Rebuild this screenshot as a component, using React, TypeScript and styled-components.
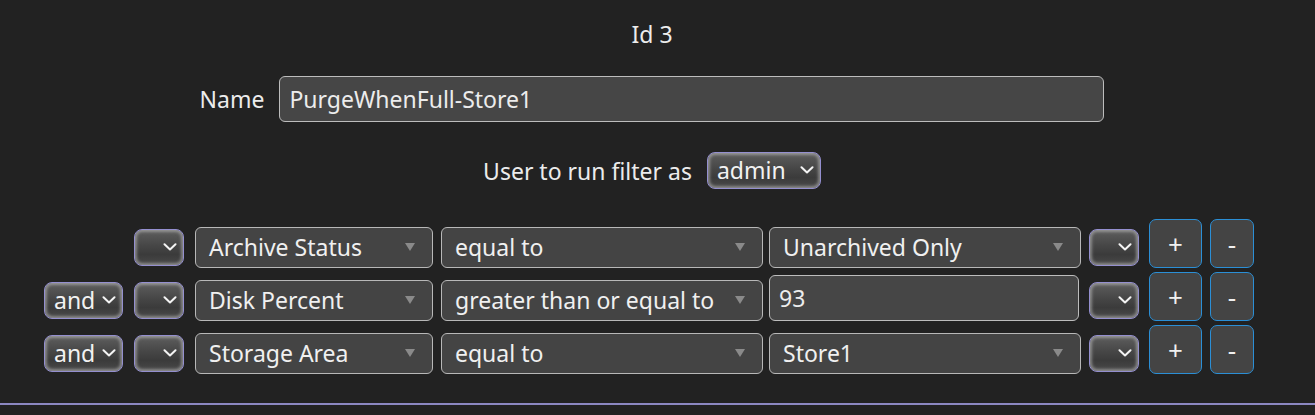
import React, { FC } from 'react'
import styled, { createGlobalStyle } from 'styled-components'

const GlobalStyle = createGlobalStyle`
  html, body {
    margin: 0;
    padding: 0;
    background: #222222;
  }

  body {
    font-family: 'Noto Sans', 'Open Sans', sans-serif;
    color: #ececec;
  }
`

const Page = styled.div`
  height: 403px;
  border-bottom: 2px solid #8c88c2;
  padding-right: 11px;
  display: flex;
  flex-direction: column;
  align-items: center;
`

const Title = styled.div`
  margin-top: 20px;
  height: 28px;
  line-height: 28px;
  font-size: 23px;
`

const FormRow = styled.div<{ $top: number }>`
  margin-top: ${({ $top }) => $top}px;
  display: flex;
  align-items: center;
  gap: 15px;
  font-size: 23px;
`

const Label = styled.span`
  white-space: nowrap;
`

const TextInput = styled.div<{ $width: number; $height: number }>`
  box-sizing: border-box;
  width: ${({ $width }) => $width}px;
  height: ${({ $height }) => $height}px;
  background: #464646;
  border: 1px solid #bdbdbd;
  border-radius: 6px;
  padding: 0 9px 1px;
  display: flex;
  align-items: center;
  font-size: 23px;
  color: #ececec;
`

const GlassSelect = styled.div<{ $width: number }>`
  box-sizing: border-box;
  width: ${({ $width }) => $width}px;
  height: 37px;
  border: 1px solid #948fcf;
  border-radius: 8px;
  background: linear-gradient(to bottom, #5e5e5e 0%, #464646 45%, #3b3b3b 70%, #4a4a4a 100%);
  box-shadow: inset 0 0 3px 2px rgba(205, 205, 205, 0.5);
  display: flex;
  align-items: center;
  justify-content: space-between;
  padding: 0 6px 1px 9px;
  font-size: 23px;
  color: #f2f2f2;
`

const DropSelect = styled.div<{ $width: number }>`
  box-sizing: border-box;
  width: ${({ $width }) => $width}px;
  height: 41px;
  background: #444444;
  border: 1px solid #b8b8b8;
  border-radius: 6px;
  padding: 0 17px 1px 13px;
  display: flex;
  align-items: center;
  justify-content: space-between;
  font-size: 23px;
  color: #f0f0f0;
  white-space: nowrap;
`

const Triangle = styled.span`
  width: 0;
  height: 0;
  border-left: 5px solid transparent;
  border-right: 5px solid transparent;
  border-top: 8px solid #8a8a8a;
`

const ActionButton = styled.button<{ $width: number }>`
  box-sizing: border-box;
  width: ${({ $width }) => $width}px;
  height: 49px;
  background: #444444;
  border: 1px solid #2b8fd6;
  border-radius: 7px;
  color: #f0f0f0;
  font-family: inherit;
  font-size: 26px;
  padding: 0;
  display: flex;
  align-items: center;
  justify-content: center;
`

const RuleTable = styled.div`
  margin-top: 30px;
  margin-right: 6px;
  display: grid;
  grid-template-columns: 90px 61px 246px 328px 320px 60px 61px 44px;
  grid-auto-rows: 49px;
  row-gap: 4px;
`

const Cell = styled.div<{ $lift?: boolean }>`
  display: flex;
  align-items: flex-end;
  padding-bottom: ${({ $lift }) => ($lift ? 2 : 0)}px;
`

const Chevron: FC = () => (
  <svg width='14' height='8' viewBox='0 0 14 8' fill='none'>
    <polyline points='1.5,1.2 7,6.5 12.5,1.2' stroke='#f4f4f4' strokeWidth='2' strokeLinecap='round' strokeLinejoin='round' />
  </svg>
)

interface Rule {
  join?: string
  field: string
  op: string
  value: string
  input?: boolean
}

const rules: Rule[] = [
  { field: 'Archive Status', op: 'equal to', value: 'Unarchived Only' },
  { join: 'and', field: 'Disk Percent', op: 'greater than or equal to', value: '93', input: true },
  { join: 'and', field: 'Storage Area', op: 'equal to', value: 'Store1' },
]

const App: FC = () => (
  <>
    <GlobalStyle />
    <Page>
      <Title>Id 3</Title>
      <FormRow $top={28}>
        <Label>Name</Label>
        <TextInput $width={825} $height={46}>PurgeWhenFull-Store1</TextInput>
      </FormRow>
      <FormRow $top={30}>
        <Label>User to run filter as</Label>
        <GlassSelect $width={114}>
          admin
          <Chevron />
        </GlassSelect>
      </FormRow>
      <RuleTable>
        {rules.map((rule, ind) => (
          <React.Fragment key={ind}>
            <Cell $lift>
              {rule.join && (
                <GlassSelect $width={79}>
                  {rule.join}
                  <Chevron />
                </GlassSelect>
              )}
            </Cell>
            <Cell $lift>
              <GlassSelect $width={50}>
                <span />
                <Chevron />
              </GlassSelect>
            </Cell>
            <Cell>
              <DropSelect $width={238}>
                {rule.field}
                <Triangle />
              </DropSelect>
            </Cell>
            <Cell>
              <DropSelect $width={322}>
                {rule.op}
                <Triangle />
              </DropSelect>
            </Cell>
            <Cell>
              {rule.input ? (
                <TextInput $width={310} $height={46}>{rule.value}</TextInput>
              ) : (
                <DropSelect $width={312}>
                  {rule.value}
                  <Triangle />
                </DropSelect>
              )}
            </Cell>
            <Cell $lift>
              <GlassSelect $width={50}>
                <span />
                <Chevron />
              </GlassSelect>
            </Cell>
            <Cell>
              <ActionButton $width={53}>+</ActionButton>
            </Cell>
            <Cell>
              <ActionButton $width={44}>-</ActionButton>
            </Cell>
          </React.Fragment>
        ))}
      </RuleTable>
    </Page>
  </>
)

export default App
